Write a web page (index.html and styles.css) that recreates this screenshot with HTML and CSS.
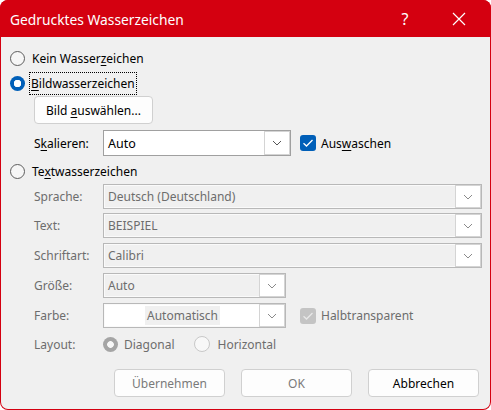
FILE: index.html
```html
<!DOCTYPE html>
<html lang="de">
<head>
<meta charset="utf-8">
<link rel="stylesheet" href="styles.css">
</head>
<body>
<div class="win">
  <div class="titlebar">
    <span class="title">Gedrucktes Wasserzeichen</span>
    <span class="help">?</span>
    <span class="close">
      <svg width="14" height="14" viewBox="0 0 14 14"><path d="M1 1L13 13M13 1L1 13" stroke="#fff" stroke-width="1.2" fill="none"/></svg>
    </span>
  </div>
  <div class="content">
    <div class="row r-kein">
      <span class="radio"></span>
      <span class="lbl">Kein Wasser<u>z</u>eichen</span>
    </div>
    <div class="row r-bild">
      <span class="radio on"></span>
      <span class="lbl focus"><u>B</u>ildwasserzeichen</span>
    </div>
    <div class="row r-btn">
      <span class="btn pick"><span>Bild <u>a</u>uswählen...</span></span>
    </div>
    <div class="row r-scale">
      <span class="flabel">S<u>k</u>alieren:</span>
      <span class="field short"><span class="val">Auto</span><span class="arrow"><svg width="10" height="6" viewBox="0 0 10 6"><path d="M1 1L5 5L9 1" stroke="#555" fill="none"/></svg></span></span>
      <span class="check on"><svg width="12" height="10" viewBox="0 0 12 10"><path d="M1.5 5.2L4.5 8L10.5 2" stroke="#fff" stroke-width="1.3" fill="none"/></svg></span>
      <span class="lbl">Aus<u>w</u>aschen</span>
    </div>
    <div class="row r-text">
      <span class="radio"></span>
      <span class="lbl">Te<u>x</u>twasserzeichen</span>
    </div>
    <div class="row r-f1">
      <span class="flabel dis">Sprache:</span>
      <span class="field long dis"><span class="val">Deutsch (Deutschland)</span><span class="arrow"><svg width="10" height="6" viewBox="0 0 10 6"><path d="M1 1L5 5L9 1" stroke="#8a8a8a" fill="none"/></svg></span></span>
    </div>
    <div class="row r-f2">
      <span class="flabel dis">Text:</span>
      <span class="field long dis"><span class="val">BEISPIEL</span><span class="arrow"><svg width="10" height="6" viewBox="0 0 10 6"><path d="M1 1L5 5L9 1" stroke="#8a8a8a" fill="none"/></svg></span></span>
    </div>
    <div class="row r-f3">
      <span class="flabel dis">Schriftart:</span>
      <span class="field long dis"><span class="val">Calibri</span><span class="arrow"><svg width="10" height="6" viewBox="0 0 10 6"><path d="M1 1L5 5L9 1" stroke="#8a8a8a" fill="none"/></svg></span></span>
    </div>
    <div class="row r-f4">
      <span class="flabel dis">Größe:</span>
      <span class="field mid dis"><span class="val">Auto</span><span class="arrow"><svg width="10" height="6" viewBox="0 0 10 6"><path d="M1 1L5 5L9 1" stroke="#8a8a8a" fill="none"/></svg></span></span>
    </div>
    <div class="row r-f5">
      <span class="flabel dis">Farbe:</span>
      <span class="field mid dis white"><span class="val center"><span class="hl">Automatisch</span></span><span class="arrow"><svg width="10" height="6" viewBox="0 0 10 6"><path d="M1 1L5 5L9 1" stroke="#8a8a8a" fill="none"/></svg></span></span>
      <span class="check dis"><svg width="12" height="10" viewBox="0 0 12 10"><path d="M1.5 5.2L4.5 8L10.5 2" stroke="#e8e8e8" stroke-width="1.3" fill="none"/></svg></span>
      <span class="lbl dis">Halbtransparent</span>
    </div>
    <div class="row r-layout">
      <span class="flabel dis">Layout:</span>
      <span class="radio dis-on"></span>
      <span class="lbl dis opt">Diagonal</span>
      <span class="radio dis-off"></span>
      <span class="lbl dis">Horizontal</span>
    </div>
    <div class="row r-buttons">
      <span class="btn b3 dis">Übernehmen</span>
      <span class="btn b3 dis">OK</span>
      <span class="btn b3">Abbrechen</span>
    </div>
  </div>
</div>
</body>
</html>
```

FILE: styles.css
```css
html, body {
  margin: 0;
  padding: 0;
  background: #ffffff;
}
body {
  width: 491px;
  height: 410px;
  overflow: hidden;
  font-family: "Noto Sans", "Open Sans", sans-serif;
  font-size: 12px;
  color: #000;
}
.win {
  width: 491px;
  height: 410px;
  display: flex;
  flex-direction: column;
  border-radius: 8px;
  overflow: hidden;
  background: #d40010;
}
.titlebar {
  height: 37px;
  flex: none;
  display: flex;
  align-items: center;
  color: #fff;
  background: #d40010;
}
.title {
  font-size: 13.8px;
  padding-left: 10px;
  padding-top: 1px;
  flex: 1;
}
.help {
  font-size: 16px;
  width: 20px;
  text-align: center;
  margin-right: 37px;
}
.close {
  width: 14px;
  height: 14px;
  margin-right: 25px;
  display: flex;
}
.content {
  flex: 1;
  margin: 0 1px 1px 1px;
  background: #f0f0f0;
  border-radius: 0 0 7px 7px;
  padding-left: 9px;
  display: flex;
  flex-direction: column;
}
.row {
  display: flex;
  align-items: center;
  flex: none;
}
u { text-decoration: underline; text-underline-offset: 2px; }
.r-kein { height: 20px; margin-top: 11px; }
.r-bild { height: 20px; margin-top: 5px; }
.r-btn { height: 28px; margin-top: 3px; padding-left: 24px; }
.r-scale { height: 26px; margin-top: 6px; padding-left: 24px; }
.r-text { height: 20px; margin-top: 5px; }
.r-f1 { height: 25px; margin-top: 3px; padding-left: 24px; }
.r-f2 { height: 25px; margin-top: 4px; padding-left: 24px; }
.r-f3 { height: 25px; margin-top: 5px; padding-left: 24px; }
.r-f4 { height: 25px; margin-top: 5px; padding-left: 24px; }
.r-f5 { height: 25px; margin-top: 5px; padding-left: 24px; }
.r-layout { height: 20px; margin-top: 6px; padding-left: 24px; }
.r-buttons { height: 28px; margin-top: 15px; padding-left: 104px; gap: 16px; }

.radio {
  width: 13px;
  height: 13px;
  border-radius: 50%;
  border: 1px solid #5d5d5d;
  background: #f6f6f6;
  flex: none;
  margin-right: 7px;
  box-sizing: content-box;
}
.radio.on {
  width: 15px;
  height: 15px;
  border: none;
  background: radial-gradient(circle, #fff 0 3.5px, #005fb8 4px);
  margin-right: 6px;
}
.radio.dis-on {
  width: 15px;
  height: 15px;
  border: none;
  background: radial-gradient(circle, #f7f7f7 0 3px, #a5a5a5 3.7px);
  margin-right: 6px;
}
.radio.dis-off {
  border-color: #c8c8c8;
  background: #f8f8f8;
  width: 14px;
  height: 14px;
}
.opt { margin-right: 20px; }
.lbl { white-space: nowrap; }
.lbl.focus {
  outline: 1px dotted #000;
  outline-offset: 0;
  padding: 2px 1px;
  margin-left: -1px;
}
.dis { color: #6d6d6d; }
.flabel {
  width: 69px;
  flex: none;
  white-space: nowrap;
}
.btn {
  display: flex;
  align-items: center;
  justify-content: center;
  height: 26px;
  background: #fdfdfd;
  border: 1px solid #d0d0d0;
  border-radius: 4px;
  box-sizing: content-box;
  white-space: nowrap;
}
.btn.pick { width: 117px; }
.btn.b3 { width: 109px; }
.btn.dis { color: #7a7a7a; }

.field {
  display: flex;
  height: 100%;
  box-sizing: border-box;
  border: 1px solid #a0a0a0;
  background: #fff;
  padding: 1px;
}
.field.short { width: 188px; }
.field.long { width: 379px; }
.field.mid { width: 183px; }
.field.dis {
  border-color: #b8b8b8;
  background: #f0f0f0;
  box-shadow: inset 0 0 0 1px #fafafa;
}
.field.dis.white { background: #fff; }
.val {
  flex: 1;
  display: flex;
  align-items: center;
  padding-left: 3px;
  white-space: nowrap;
  font-size: 12.5px;
}
.field.dis .val { color: #6d6d6d; font-size: 12px; }
.val.center { justify-content: center; padding-left: 0; }
.hl { background: #f0f0f0; padding: 1px 2px; }
.arrow {
  width: 24px;
  flex: none;
  display: flex;
  align-items: center;
  justify-content: center;
  background: #fff;
  border: 1px solid #d4d4d4;
  margin: -1px;
}
.check {
  width: 16px;
  height: 16px;
  border-radius: 3px;
  flex: none;
  display: flex;
  align-items: center;
  justify-content: center;
  margin-left: 9px;
  margin-right: 5px;
}
.check.on { background: #005fb8; }
.check.dis { background: #c4c4c4; margin-left: 14px; }
.r-scale .check { margin-left: 9px; }
```
